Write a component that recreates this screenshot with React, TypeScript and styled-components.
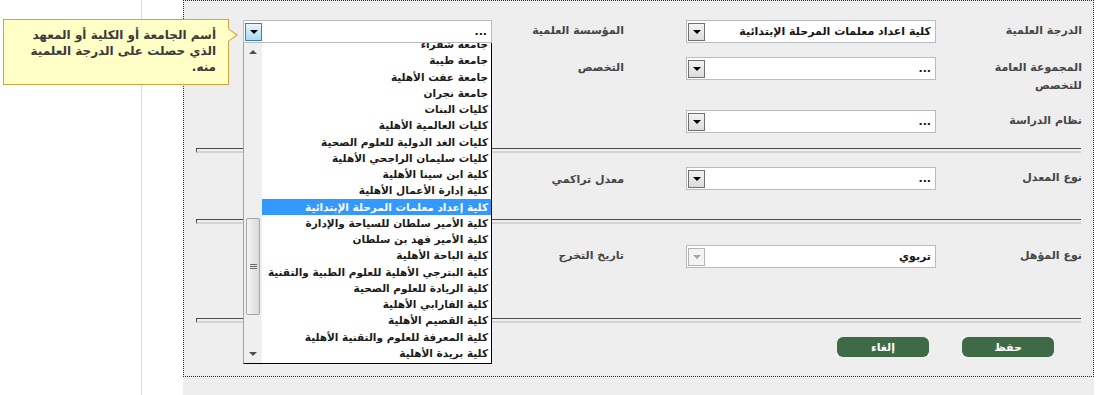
import styled, { createGlobalStyle } from "styled-components";

const GlobalStyle = createGlobalStyle`
  html, body {
    margin: 0;
    padding: 0;
    background: #fff;
  }
  body {
    font-family: "DejaVu Sans", "Noto Sans", sans-serif;
  }
`;

const institutions = [
  "جامعة شقراء",
  "جامعة طيبة",
  "جامعة عفت الأهلية",
  "جامعة نجران",
  "كليات البنات",
  "كليات العالمية الأهلية",
  "كليات الغد الدولية للعلوم الصحية",
  "كليات سليمان الراجحي الأهلية",
  "كلية ابن سينا الأهلية",
  "كلية إدارة الأعمال الأهلية",
  "كلية إعداد معلمات المرحلة الإبتدائية",
  "كلية الأمير سلطان للسياحة والإدارة",
  "كلية الأمير فهد بن سلطان",
  "كلية الباحة الأهلية",
  "كلية البترجي الأهلية للعلوم الطبية والتقنية",
  "كلية الريادة للعلوم الصحية",
  "كلية الفارابي الأهلية",
  "كلية القصيم الأهلية",
  "كلية المعرفة للعلوم والتقنية الأهلية",
  "كلية بريدة الأهلية",
  "كلية جدة الأهلية",
];
const selectedIndex = 10;

type ArrowState = "normal" | "focus" | "disabled";

const Select = ({ value, state = "normal" }: { value: string; state?: ArrowState }) => (
  <SelectBox>
    <SelectValue>{value}</SelectValue>
    <ArrowBtn $state={state}>
      <ArrowGlyph $muted={state === "disabled"} />
    </ArrowBtn>
  </SelectBox>
);

const App = () => {
  return (
    <Page>
      <GlobalStyle />
      <Rail />
      <Main>
        <Panel>
          <FormRow $h={37}>
            <Label>الدرجة العلمية</Label>
            <FieldCell>
              <Select value="كلية اعداد معلمات المرحلة الإبتدائية" />
            </FieldCell>
            <Label $inset={62}>المؤسسة العلمية</Label>
            <FieldCell>
              <Select value="..." state="focus" />
              <Tooltip>
                <TipLine>أسم الجامعة أو الكلية أو المعهد</TipLine>
                <TipLine>الذي حصلت على الدرجة العلمية</TipLine>
                <TipLine>منه.</TipLine>
              </Tooltip>
              <DropList>
                <Viewport>
                  <ItemsInner>
                    {institutions.map((name, i) => (
                      <Item key={name} $selected={i === selectedIndex}>
                        {name}
                      </Item>
                    ))}
                  </ItemsInner>
                </Viewport>
                <Track>
                  <ScrollArrow>
                    <UpGlyph />
                  </ScrollArrow>
                  <Thumb $top={157}>
                    <Grip />
                  </Thumb>
                  <TrackFill />
                  <ScrollArrow>
                    <DownGlyph />
                  </ScrollArrow>
                </Track>
              </DropList>
            </FieldCell>
          </FormRow>

          <FormRow $h={53}>
            <Label>
              المجموعة العامة
              <br />
              للتخصص
            </Label>
            <FieldCell>
              <Select value="..." />
            </FieldCell>
            <Label $inset={62}>التخصص</Label>
            <FieldCell>
              {/* covered by the open list above */}
              <Select value="" />
            </FieldCell>
          </FormRow>

          <FormRow $h={38}>
            <Label>نظام الدراسة</Label>
            <FieldCell>
              <Select value="..." />
            </FieldCell>
          </FormRow>

          <Separator />

          <FormRow $h={66} $pt={14}>
            <Label>نوع المعدل</Label>
            <FieldCell>
              <Select value="..." />
            </FieldCell>
            <Label $inset={62} $drop={2}>
              معدل تراكمي
            </Label>
            <FieldCell>
              <Select value="" />
            </FieldCell>
          </FormRow>

          <Separator />

          <FormRow $h={94} $pt={21}>
            <Label>نوع المؤهل</Label>
            <FieldCell>
              <Select value="تربوي" state="disabled" />
            </FieldCell>
            <Label $inset={62}>تاريخ التخرج</Label>
            <FieldCell>
              <Select value="" />
            </FieldCell>
          </FormRow>

          <Separator />

          <ButtonRow>
            <ActionButton>
              <span>حفظ</span>
            </ActionButton>
            <ActionButton>
              <span>إلغاء</span>
            </ActionButton>
          </ButtonRow>
        </Panel>
      </Main>
    </Page>
  );
};

const Page = styled.div`
  display: flex;
  width: 1100px;
  height: 395px;
  background: #fff;
  overflow: hidden;
`;

const Rail = styled.div`
  width: 142px;
  flex: none;
  box-sizing: border-box;
  border-right: 1px solid #dadada;
`;

const Main = styled.main`
  width: 911px;
  flex: none;
  margin-left: 41px;
  height: 395px;
  background: #eeeeee;
`;

const Panel = styled.section`
  height: 377px;
  box-sizing: border-box;
  border: 1px dotted #2b2b2b;
  padding-top: 19px;
  direction: rtl;
`;

const FormRow = styled.div<{ $h: number; $pt?: number }>`
  display: grid;
  grid-template-columns: 146px 250px 194px 249px;
  align-items: start;
  box-sizing: border-box;
  height: ${(p) => p.$h}px;
  padding: ${(p) => p.$pt ?? 0}px 11px 0 0;
`;

const Label = styled.div<{ $inset?: number; $drop?: number }>`
  padding-top: ${(p) => 2 + (p.$drop ?? 0)}px;
  padding-right: ${(p) => p.$inset ?? 0}px;
  font-size: 11px;
  font-weight: bold;
  line-height: 18px;
  color: #464646;
  text-align: right;
  white-space: nowrap;
`;

const FieldCell = styled.div`
  position: relative;
`;

const SelectBox = styled.div`
  display: flex;
  align-items: center;
  gap: 4px;
  height: 23px;
  box-sizing: border-box;
  padding: 0 4px 0 1px;
  border: 1px solid #b7bcc2;
  background: #fff;
`;

const SelectValue = styled.span`
  flex: 1;
  overflow: hidden;
  text-align: right;
  white-space: nowrap;
  font-size: 11px;
  font-weight: bold;
  color: #151515;
`;

const arrowColors = {
  normal: { border: "#707070", bg: "linear-gradient(#f3f3f3, #dcdcdc)" },
  focus: { border: "#3c7fb1", bg: "linear-gradient(#eaf6fd, #a9dbf6)" },
  disabled: { border: "#b0b4b8", bg: "#f4f4f4" },
};

const ArrowBtn = styled.span<{ $state: ArrowState }>`
  display: flex;
  align-items: center;
  justify-content: center;
  flex: none;
  width: 17px;
  height: 18px;
  box-sizing: border-box;
  border: 1px solid ${(p) => arrowColors[p.$state].border};
  background: ${(p) => arrowColors[p.$state].bg};
`;

const ArrowGlyph = styled.span<{ $muted?: boolean }>`
  width: 0;
  height: 0;
  margin-top: 1px;
  border-left: 4px solid transparent;
  border-right: 4px solid transparent;
  border-top: 4px solid ${(p) => (p.$muted ? "#a3a3a3" : "#000")};
`;

const Tooltip = styled.div`
  position: absolute;
  left: -240px;
  top: -1px;
  width: 226px;
  height: 66px;
  box-sizing: border-box;
  padding: 7px 12px 0 8px;
  background: #ffffc6;
  border: 1px solid #d6a23a;
  text-align: right;
  font-size: 12px;
  font-weight: bold;
  line-height: 16px;
  color: #3a3a3a;
  z-index: 10;

  &::before,
  &::after {
    content: "";
    position: absolute;
    left: 100%;
    width: 0;
    height: 0;
  }
  &::before {
    top: 8px;
    border-top: 7px solid transparent;
    border-bottom: 7px solid transparent;
    border-left: 10px solid #d6a23a;
  }
  &::after {
    top: 9px;
    border-top: 6px solid transparent;
    border-bottom: 6px solid transparent;
    border-left: 8.5px solid #ffffc6;
  }
`;

const TipLine = styled.div`
  white-space: nowrap;
`;

const DropList = styled.div`
  position: absolute;
  top: 100%;
  left: 0;
  right: 0;
  height: 321px;
  display: flex;
  box-sizing: border-box;
  background: #fff;
  border-left: 1px solid #a3a3a3;
  border-right: 1px solid #000;
  border-bottom: 1px solid #000;
  z-index: 5;
`;

const Viewport = styled.div`
  flex: 1;
  overflow: hidden;
`;

const ItemsInner = styled.div`
  margin-top: -7px;
`;

const Item = styled.div<{ $selected?: boolean }>`
  height: 16.25px;
  line-height: 16.25px;
  padding-right: 3px;
  text-align: right;
  white-space: nowrap;
  font-size: 10.5px;
  font-weight: bold;
  color: ${(p) => (p.$selected ? "#fff" : "#1b1b1b")};
  background: ${(p) => (p.$selected ? "#3399ff" : "transparent")};
`;

const Track = styled.div`
  display: flex;
  flex-direction: column;
  align-items: center;
  flex: none;
  width: 18px;
  background: #efefef;
`;

const ScrollArrow = styled.div`
  display: flex;
  align-items: center;
  justify-content: center;
  flex: none;
  height: 18px;
  width: 100%;
`;

const UpGlyph = styled.span`
  width: 0;
  height: 0;
  border-left: 4px solid transparent;
  border-right: 4px solid transparent;
  border-bottom: 4px solid #4f4f4f;
`;

const DownGlyph = styled.span`
  width: 0;
  height: 0;
  border-left: 4px solid transparent;
  border-right: 4px solid transparent;
  border-top: 4px solid #4f4f4f;
`;

const Thumb = styled.div<{ $top: number }>`
  display: flex;
  align-items: center;
  justify-content: center;
  margin-top: ${(p) => p.$top}px;
  width: 14px;
  height: 97px;
  box-sizing: border-box;
  border: 1px solid #a5a5a5;
  border-radius: 2px;
  background: linear-gradient(to right, #f4f4f4, #dadada);
`;

const Grip = styled.span`
  width: 7px;
  height: 5px;
  background: repeating-linear-gradient(
    to bottom,
    #6a6a6a 0 1px,
    transparent 1px 2px
  );
`;

const TrackFill = styled.div`
  flex: 1;
`;

const Separator = styled.div`
  height: 2px;
  margin: 0 12px;
  border-top: 1px solid #4a4a4a;
  border-left: 1px solid #4a4a4a;
  border-bottom: 2px solid #d4d4d4;
`;

const ButtonRow = styled.div`
  display: flex;
  gap: 33px;
  padding: 14px 39px 0 0;
`;

const ActionButton = styled.button`
  position: relative;
  width: 92px;
  height: 20px;
  padding: 0;
  border: none;
  background: #fff;
  font-family: inherit;
  font-size: 11px;
  font-weight: bold;
  color: #fff;
  cursor: pointer;

  &::before {
    content: "";
    position: absolute;
    inset: 0;
    border-radius: 6px;
    background: #3e6a46;
  }
  & > span {
    position: relative;
  }
`;

export default App;
